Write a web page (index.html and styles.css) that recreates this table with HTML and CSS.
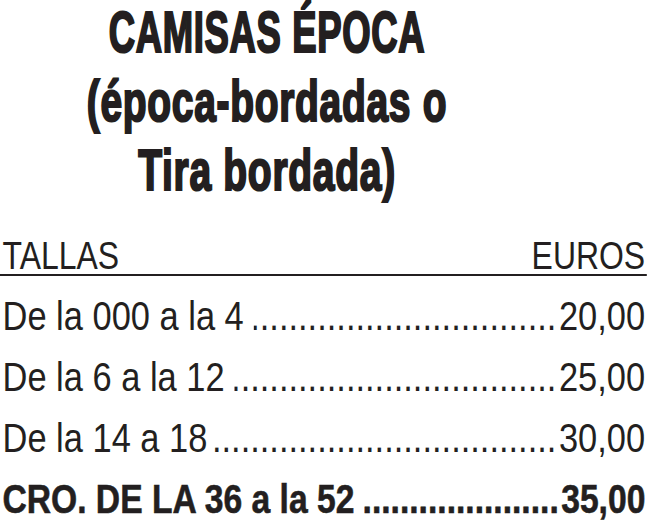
FILE: index.html
```html
<!DOCTYPE html>
<html lang="es">
<head>
<meta charset="utf-8">
<title>Camisas Época</title>
<link rel="stylesheet" href="styles.css">
</head>
<body>
<div class="sheet">
  <h1 class="title">
    <span class="title-line l1">CAMISAS ÉPOCA</span>
    <span class="title-line l2">(época-bordadas o</span>
    <span class="title-line l3">Tira bordada)</span>
  </h1>
  <div class="price-head">
    <span>TALLAS</span>
    <span>EUROS</span>
  </div>
  <ul class="prices">
    <li class="row"><span class="label">De la 000 a la 4</span><span class="leader"><span>..................................................................</span></span><span class="amount">20,00</span></li>
    <li class="row"><span class="label">De la 6 a la 12</span><span class="leader"><span>..................................................................</span></span><span class="amount">25,00</span></li>
    <li class="row tight"><span class="label">De la 14 a 18</span><span class="leader"><span>..................................................................</span></span><span class="amount">30,00</span></li>
    <li class="row strong"><span class="label">CRO. DE LA 36 a la 52</span><span class="leader"><span>..................................................................</span></span><span class="amount">35,00</span></li>
  </ul>
</div>
</body>
</html>
```
FILE: styles.css
```css
html, body {
  margin: 0;
  padding: 0;
  background: #ffffff;
}

.sheet {
  width: 647px;
  overflow: hidden;
  color: #231f20;
  font-family: "Liberation Sans", Arial, sans-serif;
}

.title {
  margin: -2px 0 0 0;
  width: 534px;
  text-align: center;
  font-size: 57px;
  font-weight: 700;
  line-height: 69px;
  letter-spacing: 1px;
  -webkit-text-stroke: 2.2px #231f20;
}

.title-line {
  display: block;
  white-space: nowrap;
}

.l1 { transform: scaleX(0.64); }
.l2 { transform: scaleX(0.684); }
.l3 { transform: scaleX(0.685); }

.price-head {
  margin-top: 33px;
  width: 770px;
  box-sizing: border-box;
  transform: scaleX(0.84);
  transform-origin: 0 0;
  display: flex;
  justify-content: space-between;
  padding: 0 2px 0 3px;
  font-size: 38px;
  line-height: 36px;
  border-bottom: 2px solid #231f20;
}

.prices {
  list-style: none;
  margin: 10px 0 0 0;
  padding: 0;
}

.row {
  width: 770px;
  box-sizing: border-box;
  transform: scaleX(0.84);
  transform-origin: 0 0;
  display: flex;
  align-items: baseline;
  padding: 0 2px 0 3px;
  font-size: 41px;
  line-height: 61px;
  white-space: nowrap;
}

.row.strong {
  width: 789px;
  transform: scaleX(0.82);
  font-weight: 700;
  -webkit-text-stroke: 0.6px #231f20;
}

.leader {
  flex: 1 1 auto;
  min-width: 0;
  display: flex;
  justify-content: flex-end;
  overflow: hidden;
  margin-left: 12px;
  margin-right: 3px;
}

.row.tight .leader {
  margin-left: 3px;
}

.leader > span {
  flex-shrink: 0;
}
```
